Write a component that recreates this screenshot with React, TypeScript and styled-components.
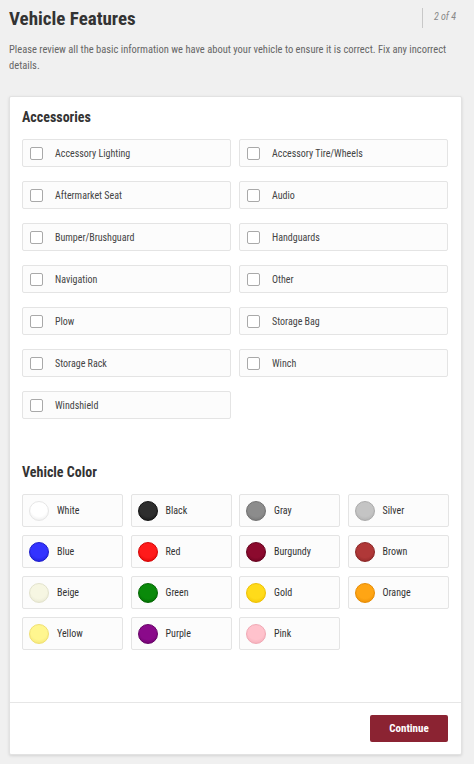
import React from "react";
import styled, { createGlobalStyle } from "styled-components";

const Global = createGlobalStyle`
  html, body { margin: 0; padding: 0; background: #f0f0f0; }
  body { font-family: "Liberation Sans Narrow", "Roboto Condensed", Roboto, sans-serif; color: #444; }
  * { box-sizing: border-box; }
`;

const Page = styled.div`
  width: 474px;
  min-height: 764px;
  padding: 0 12px 10px 9px;
  display: flex;
  flex-direction: column;
`;

const Header = styled.div`
  display: flex;
  justify-content: space-between;
  align-items: flex-start;
  padding-top: 8px;
`;

const Title = styled.h1`
  margin: 0;
  font-size: 19px;
  line-height: 22px;
  font-weight: 700;
  color: #333;
`;

const Step = styled.div`
  border-left: 1px solid #c8c8c8;
  height: 20px;
  padding-left: 11px;
  margin-right: 6px;
  font-size: 10px;
  font-style: italic;
  color: #888;
  line-height: 18px;
`;

const Intro = styled.p`
  margin: 12px 0 0 0;
  font-size: 10.5px;
  line-height: 16px;
  color: #666;
`;

const Card = styled.div`
  margin-top: 22px;
  background: #fff;
  border: 1px solid #e2e2e2;
  border-radius: 2px;
  box-shadow: 0 1px 3px rgba(0, 0, 0, 0.12);
  display: flex;
  flex-direction: column;
  height: 659px;
`;

const Body = styled.div`
  flex: 1;
  padding: 12px 12px 0 12px;
`;

const SectionTitle = styled.h2<{ $top?: number }>`
  margin: ${(p) => p.$top ?? 0}px 0 14px 0;
  font-size: 14px;
  line-height: 16px;
  font-weight: 700;
  color: #333;
`;

const CheckGrid = styled.div`
  display: grid;
  grid-template-columns: 209px 209px;
  column-gap: 8px;
  row-gap: 14px;
`;

const CheckItem = styled.label`
  display: flex;
  align-items: center;
  height: 28px;
  padding-left: 7px;
  background: #fcfcfc;
  border: 1px solid #e4e4e4;
  border-radius: 2px;
  font-size: 10px;
  color: #444;
`;

const Box = styled.span`
  width: 13px;
  height: 13px;
  border: 1px solid #a9a9a9;
  border-radius: 2px;
  background: #fff;
  margin-right: 12px;
  flex-shrink: 0;
`;

const ColorGrid = styled.div`
  display: grid;
  grid-template-columns: repeat(4, 101px);
  column-gap: 7.5px;
  row-gap: 8px;
`;

const ColorItem = styled.div`
  display: flex;
  align-items: center;
  height: 33px;
  padding-left: 6px;
  background: #fcfcfc;
  border: 1px solid #e4e4e4;
  border-radius: 2px;
  font-size: 10px;
  color: #333;
`;

const Swatch = styled.span<{ $c: string; $b: string }>`
  width: 20px;
  height: 20px;
  border-radius: 50%;
  background: radial-gradient(circle at 50% 35%, ${(p) => p.$c} 55%, ${(p) => p.$b} 100%);
  border: 1px solid ${(p) => p.$b};
  margin-right: 8px;
  flex-shrink: 0;
`;

const Footer = styled.div`
  border-top: 1px solid #e6e6e6;
  padding: 12px 13px 12px 12px;
  display: flex;
  justify-content: flex-end;
`;

const Button = styled.button`
  width: 78px;
  height: 27px;
  border: none;
  border-radius: 2px;
  background: #8b2332;
  color: #fff;
  font-family: inherit;
  font-size: 11px;
  font-weight: 700;
  cursor: pointer;
`;

const accessories = [
  "Accessory Lighting",
  "Accessory Tire/Wheels",
  "Aftermarket Seat",
  "Audio",
  "Bumper/Brushguard",
  "Handguards",
  "Navigation",
  "Other",
  "Plow",
  "Storage Bag",
  "Storage Rack",
  "Winch",
  "Windshield",
];

const colors: { name: string; c: string; b: string }[] = [
  { name: "White", c: "#ffffff", b: "#e6e6e6" },
  { name: "Black", c: "#2e2e2e", b: "#111111" },
  { name: "Gray", c: "#8c8c8c", b: "#707070" },
  { name: "Silver", c: "#c4c4c4", b: "#aaaaaa" },
  { name: "Blue", c: "#3333ff", b: "#1a1acc" },
  { name: "Red", c: "#ff1a1a", b: "#d40000" },
  { name: "Burgundy", c: "#8c0a2e", b: "#65001c" },
  { name: "Brown", c: "#b03838", b: "#8a2424" },
  { name: "Beige", c: "#f6f6e2", b: "#e2e2cc" },
  { name: "Green", c: "#0a8a0a", b: "#006400" },
  { name: "Gold", c: "#ffdb1a", b: "#eec000" },
  { name: "Orange", c: "#ffa514", b: "#e68a00" },
  { name: "Yellow", c: "#fff68f", b: "#f0e070" },
  { name: "Purple", c: "#8a0a8a", b: "#660066" },
  { name: "Pink", c: "#ffc2cc", b: "#f0a8b4" },
];

export default function App() {
  return (
    <>
      <Global />
      <Page>
        <Header>
          <Title>Vehicle Features</Title>
          <Step>2 of 4</Step>
        </Header>
        <Intro>
          Please review all the basic information we have about your vehicle to ensure it is correct. Fix any incorrect
          details.
        </Intro>
        <Card>
          <Body>
            <SectionTitle>Accessories</SectionTitle>
            <CheckGrid>
              {accessories.map((a) => (
                <CheckItem key={a}>
                  <Box />
                  {a}
                </CheckItem>
              ))}
            </CheckGrid>
            <SectionTitle $top={45}>Vehicle Color</SectionTitle>
            <ColorGrid>
              {colors.map((c) => (
                <ColorItem key={c.name}>
                  <Swatch $c={c.c} $b={c.b} />
                  {c.name}
                </ColorItem>
              ))}
            </ColorGrid>
          </Body>
          <Footer>
            <Button>Continue</Button>
          </Footer>
        </Card>
      </Page>
    </>
  );
}
